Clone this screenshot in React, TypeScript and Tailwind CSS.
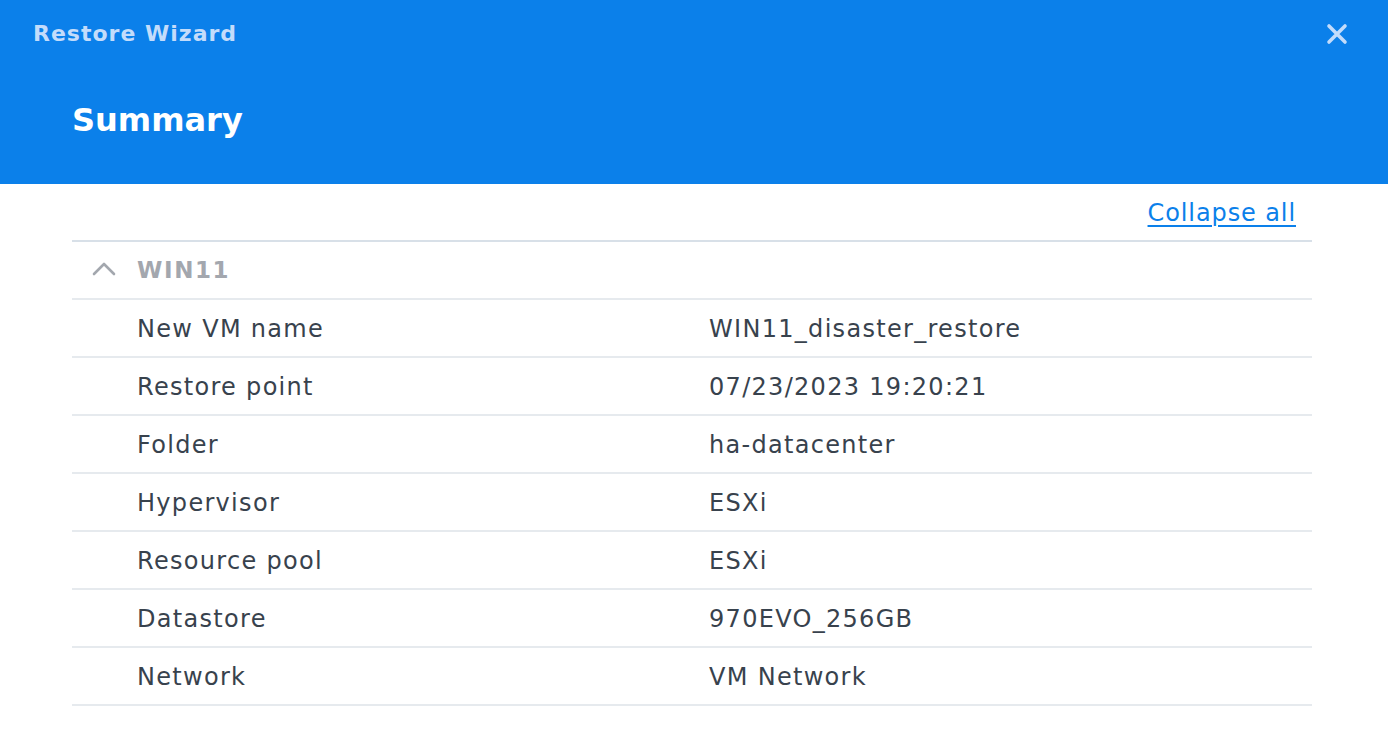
const rows = [
  { label: 'New VM name', value: 'WIN11_disaster_restore' },
  { label: 'Restore point', value: '07/23/2023 19:20:21' },
  { label: 'Folder', value: 'ha-datacenter' },
  { label: 'Hypervisor', value: 'ESXi' },
  { label: 'Resource pool', value: 'ESXi' },
  { label: 'Datastore', value: '970EVO_256GB' },
  { label: 'Network', value: 'VM Network' },
];

export default function App() {
  return (
    <div className="w-[1388px] h-[744px] bg-white overflow-hidden font-['DejaVu_Sans',Verdana,sans-serif]">
      {/* Header */}
      <div className="h-[184px] bg-[#0b80ea] relative">
        <div className="pt-[20px] pl-[33px] text-[22px] font-bold text-[#c3dcfb] leading-[28px] tracking-[1px]">Restore Wizard</div>
        <button className="absolute right-[40px] top-[23px]">
          <svg width="22" height="22" viewBox="0 0 22 22" className="text-[#c3dcfb]">
            <path d="M3 3 L19 19 M19 3 L3 19" stroke="currentColor" strokeWidth="3.6" strokeLinecap="round" fill="none" />
          </svg>
        </button>
        <div className="pt-[52px] pl-[72px] text-[32px] font-bold text-white leading-[40px]">Summary</div>
      </div>

      <div className="pl-[72px] pr-[76px]">
        <div className="flex justify-end h-[56px] items-end pb-[12px] pr-[16px]">
          <a href="#" className="text-[24px] leading-[30px] text-[#0b80ea] underline underline-offset-[4px] decoration-[2px] tracking-[0.9px]">Collapse all</a>
        </div>

        <div className="border-t-2 border-[#d8e0e8]">
          <div className="h-[58px] flex items-center border-b-2 border-[#e6eaee]">
            <svg width="24" height="16" viewBox="0 0 24 16" className="ml-[20px] mr-[21px] text-[#a3a7ae] -mt-[2px]">
              <path d="M2 13 L12 3 L22 13" stroke="currentColor" strokeWidth="2.6" strokeLinecap="round" strokeLinejoin="round" fill="none" />
            </svg>
            <span className="text-[23px] font-bold text-[#a3a7ae] tracking-[1.6px]">WIN11</span>
          </div>
          {rows.map(r => (
            <div key={r.label} className="h-[58px] flex items-center border-b-2 border-[#e6eaee] text-[24px] text-[#38424d] tracking-[1.3px] pt-[2px]">
              <div className="w-[637px] pl-[65px]">{r.label}</div>
              <div>{r.value}</div>
            </div>
          ))}
        </div>
      </div>
    </div>
  );
}
